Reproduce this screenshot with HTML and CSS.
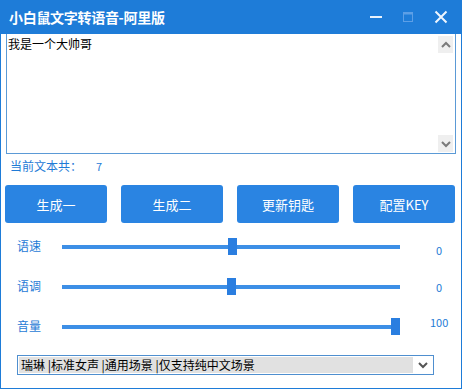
FILE: index.html
```html
<!DOCTYPE html>
<html lang="zh-CN">
<head>
    <meta charset="UTF-8">
    <title>小白鼠文字转语音-阿里版</title>
    <link rel="stylesheet" href="styles.css">
</head>
<body>
    <div class="window">
        <div class="titlebar">
            <span class="title">小白鼠文字转语音-阿里版</span>
            <div class="controls">
                <svg class="ctl" width="14" height="14" viewBox="0 0 14 14"><rect x="1" y="6" width="12" height="2" fill="#e8f2fc"/></svg>
                <svg class="ctl ctl-max" width="14" height="14" viewBox="0 0 14 14"><rect x="2.5" y="2.5" width="9" height="9" fill="none" stroke="#5d9fe6" stroke-width="1"/><rect x="2.5" y="2.5" width="9" height="2" fill="#5d9fe6"/></svg>
                <svg class="ctl" width="16" height="16" viewBox="0 0 16 16"><path d="M2.5 2.5 L13.5 13.5 M13.5 2.5 L2.5 13.5" stroke="#eef6fe" stroke-width="2"/></svg>
            </div>
        </div>

        <div class="editor">
            <div class="editor-text">我是一个大帅哥</div>
            <div class="scrollbar">
                <div class="arrow"><svg width="10" height="8" viewBox="0 0 10 8"><path d="M1 6 L5 2 L9 6" fill="none" stroke="#7a7a7a" stroke-width="2"/></svg></div>
                <div class="arrow"><svg width="10" height="8" viewBox="0 0 10 8"><path d="M1 2 L5 6 L9 2" fill="none" stroke="#7a7a7a" stroke-width="2"/></svg></div>
            </div>
        </div>

        <div class="count">
            <span>当前文本共：</span>
            <span class="count-num">7</span>
        </div>

        <div class="buttons">
            <button class="btn">生成一</button>
            <button class="btn">生成二</button>
            <button class="btn">更新钥匙</button>
            <button class="btn">配置KEY</button>
        </div>

        <div class="sliders">
            <div class="slider-row">
                <span class="slider-label">语速</span>
                <div class="track"><span class="thumb" style="left: 49%"></span></div>
                <span class="slider-value v-low">0</span>
            </div>
            <div class="slider-row">
                <span class="slider-label">语调</span>
                <div class="track"><span class="thumb" style="left: 48.8%"></span></div>
                <span class="slider-value">0</span>
            </div>
            <div class="slider-row">
                <span class="slider-label">音量</span>
                <div class="track"><span class="thumb" style="left: 97.4%"></span></div>
                <span class="slider-value v-high">100</span>
            </div>
        </div>

        <div class="select">
            <div class="select-text">瑞琳 |标准女声 |通用场景 |仅支持纯中文场景</div>
            <div class="select-arrow"><svg width="10" height="8" viewBox="0 0 10 8"><path d="M1 2 L5 6 L9 2" fill="none" stroke="#555" stroke-width="2"/></svg></div>
        </div>
    </div>
</body>
</html>
```

FILE: styles.css
```css
* {
    box-sizing: border-box;
}

body {
    margin: 0;
    font-family: "Noto Sans CJK SC", "Liberation Sans", sans-serif;
    background: #fff;
}

.window {
    width: 462px;
    height: 389px;
    border: 1px solid #1e7cd8;
    border-top: none;
    background: #fff;
}

.titlebar {
    height: 34px;
    background: #1e7cd8;
    display: flex;
    align-items: center;
    padding-left: 9px;
    margin: 0 -1px;
}

.title {
    color: #fff;
    font-size: 14px;
    font-weight: bold;
    letter-spacing: -0.3px;
}

.controls {
    margin-left: auto;
    display: flex;
    align-items: center;
    gap: 18px;
    padding-right: 13px;
}

.ctl {
    display: block;
}

.editor {
    margin: 0 5px 0 5px;
    height: 120px;
    border: 1px solid #5b9ad6;
    border-top: none;
    display: flex;
}

.editor-text {
    flex: 1;
    padding: 2px 0 0 1px;
    font-size: 12px;
    line-height: 16px;
    color: #000;
}

.scrollbar {
    width: 16px;
    margin-right: 1px;
    display: flex;
    flex-direction: column;
    justify-content: space-between;
    padding: 2px 0 1px;
}

.arrow {
    width: 15px;
    height: 17px;
    background: #efefef;
    display: flex;
    align-items: center;
    justify-content: center;
}

.count {
    display: flex;
    padding: 4px 0 0 9px;
    height: 31px;
    font-size: 12px;
    color: #1f7bd6;
    line-height: 16px;
}

.count-num {
    margin-left: 14px;
    font-size: 11px;
}

.buttons {
    display: flex;
    gap: 14px;
    padding: 0 5px 0 4px;
}

.btn {
    width: 102px;
    height: 38px;
    border: none;
    border-radius: 3px;
    background: #2a84e2;
    color: #fff;
    font-family: inherit;
    font-size: 13px;
    padding: 0;
}

.sliders {
    padding-top: 4px;
}

.slider-row {
    display: flex;
    align-items: center;
    height: 40px;
}

.slider-label {
    width: 61px;
    padding-left: 16px;
    font-size: 12px;
    color: #1f7bd6;
    margin-top: -3px;
}

.track {
    position: relative;
    width: 338px;
    height: 4px;
    background: #3d8fe6;
}

.thumb {
    position: absolute;
    top: -7px;
    width: 9px;
    height: 17px;
    background: #2a7ee0;
}

.slider-value {
    flex: 1;
    padding-left: 36px;
    font-size: 11px;
    color: #1f7bd6;
}

.v-low {
    margin-top: 6px;
}

.v-high {
    margin-top: -10px;
    padding-left: 30px;
}

.select {
    margin: 8px 0 0 16px;
    width: 417px;
    height: 20px;
    border: 1px solid #4f8fcf;
    display: flex;
    align-items: center;
    padding: 1px;
}

.select-text {
    width: 394px;
    height: 16px;
    background: #e1e1e1;
    font-size: 12px;
    line-height: 16px;
    padding-left: 2px;
    color: #000;
    white-space: nowrap;
}

.select-arrow {
    flex: 1;
    display: flex;
    justify-content: center;
}
```
